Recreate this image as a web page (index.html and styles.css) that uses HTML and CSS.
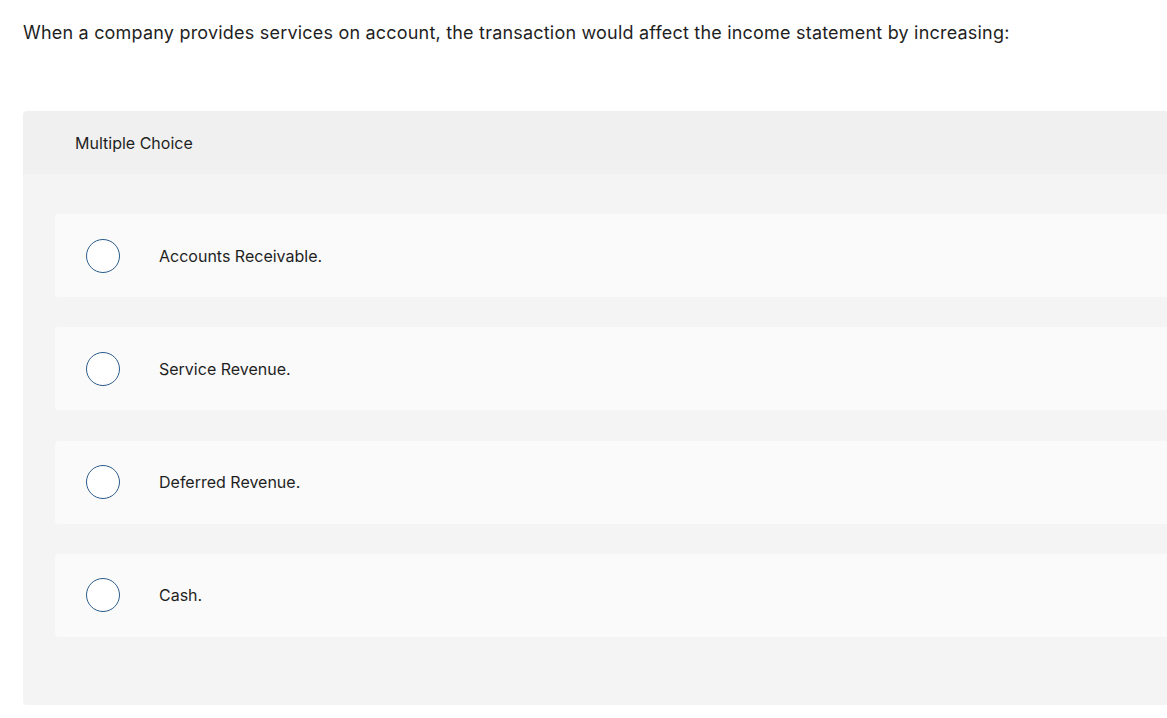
FILE: index.html
```html
<!DOCTYPE html>
<html lang="en">
<head>
<meta charset="utf-8">
<title>Multiple Choice</title>
<link rel="stylesheet" href="styles.css">
</head>
<body>
<div class="page">
  <p class="question">When a company provides services on account, the transaction would affect the income statement by increasing:</p>
  <div class="mc">
    <div class="mc-header">Multiple Choice</div>
    <div class="mc-body">
      <div class="option"><span class="radio"></span><span class="label">Accounts Receivable.</span></div>
      <div class="option"><span class="radio"></span><span class="label">Service Revenue.</span></div>
      <div class="option"><span class="radio"></span><span class="label">Deferred Revenue.</span></div>
      <div class="option"><span class="radio"></span><span class="label">Cash.</span></div>
    </div>
  </div>
</div>
</body>
</html>
```

FILE: styles.css
```css
html, body {
  margin: 0;
  padding: 0;
  background: #ffffff;
  overflow: hidden;
}
body {
  font-family: "Inter", "Liberation Sans", sans-serif;
  color: #1f1f1f;
}
.page {
  padding: 20px 0 0 23px;
}
.question {
  margin: 0;
  font-size: 18px;
  letter-spacing: 0.2px;
  line-height: 26px;
  height: 91px;
}
.mc {
  width: 1200px;
  border-radius: 4px 0 0 4px;
  overflow: hidden;
}
.mc-header {
  background: #f0f0f0;
  height: 63px;
  display: flex;
  align-items: center;
  padding-left: 52px;
  font-size: 16px;
}
.mc-body {
  background: #f4f4f4;
  padding: 40px 0 68px 32px;
  display: flex;
  flex-direction: column;
  gap: 30.33px;
}
.option {
  background: #fafafa;
  border-radius: 4px 0 0 4px;
  height: 83px;
  display: flex;
  align-items: center;
  padding-left: 31px;
}
.radio {
  width: 32px;
  height: 32px;
  border: 1.5px solid #2c5c8c;
  border-radius: 50%;
  background: #ffffff;
  flex: none;
}
.label {
  margin-left: 39px;
  font-size: 16px;
}
```
